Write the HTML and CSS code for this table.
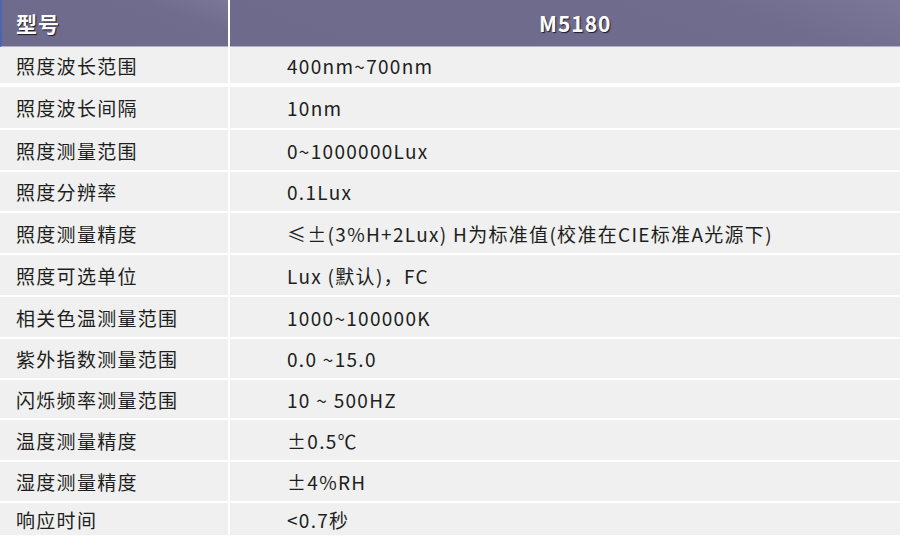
FILE: index.html
```html
<!DOCTYPE html>
<html lang="zh-CN">
<head>
<meta charset="utf-8">
<link rel="stylesheet" href="styles.css">
</head>
<body>
<div class="spec">
  <div class="cell head key">型号</div>
  <div class="cell head val">M5180</div>

  <div class="cell key first">照度波长范围</div><div class="cell val first">400nm~700nm</div>
  <div class="cell key">照度波长间隔</div><div class="cell val">10nm</div>
  <div class="cell key">照度测量范围</div><div class="cell val">0~1000000Lux</div>
  <div class="cell key">照度分辨率</div><div class="cell val">0.1Lux</div>
  <div class="cell key">照度测量精度</div><div class="cell val">≤±(3%H+2Lux) H为标准值(校准在CIE标准A光源下)</div>
  <div class="cell key">照度可选单位</div><div class="cell val">Lux (默认)，FC</div>
  <div class="cell key">相关色温测量范围</div><div class="cell val">1000~100000K</div>
  <div class="cell key">紫外指数测量范围</div><div class="cell val">0.0 ~15.0</div>
  <div class="cell key">闪烁频率测量范围</div><div class="cell val">10 ~ 500HZ</div>
  <div class="cell key">温度测量精度</div><div class="cell val">±0.5℃</div>
  <div class="cell key">湿度测量精度</div><div class="cell val">±4%RH</div>
  <div class="cell key">响应时间</div><div class="cell val">&lt;0.7秒</div>
</div>
</body>
</html>
```
FILE: styles.css
```css
html, body {
  margin: 0;
  padding: 0;
  background: #ffffff;
}
body {
  width: 900px;
  height: 544px;
  overflow: hidden;
  font-family: "Noto Sans CJK SC", "Noto Sans", sans-serif;
  color: #1e1e1e;
}
.spec {
  display: grid;
  grid-template-columns: 228px 670px;
  grid-template-rows: 45px 38px 41px 40px 39px 40px 40px 40px 39px 38px 40px 39px 32px;
  column-gap: 2px;
  row-gap: 2px;
  width: 900px;
}
.spec > .head {
  margin-bottom: -2px;
}
.cell {
  display: flex;
  align-items: center;
  background: #eff0ef;
  font-size: 19px;
  letter-spacing: 1.3px;
}
.first {
  margin-bottom: 2px;
}
.key {
  padding-left: 16px;
}
.val {
  padding-left: 57px;
}
.head {
  background: linear-gradient(200deg, #7b7798 0%, #706c8e 25%, #6e6a8c 100%);
  color: #ffffff;
  font-weight: bold;
  font-size: 21px;
  letter-spacing: 1px;
  text-shadow: 1px 1px 1px #1c1a2a;
  border-bottom: 1px solid #b4aec6;
  box-sizing: border-box;
}
.head.key {
  border-left: 2px solid #4a66b0;
  padding-left: 14px;
}
.head.val {
  padding-left: 309px;
  font-size: 21px;
  letter-spacing: 1px;
}
```
